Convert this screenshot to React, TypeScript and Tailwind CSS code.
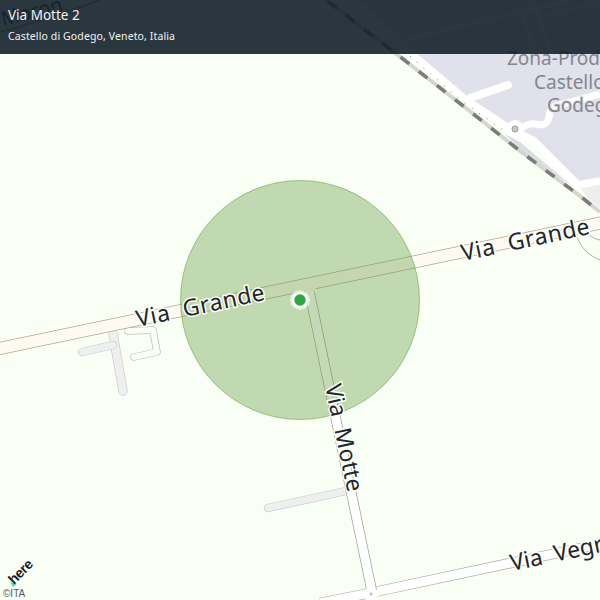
const Casing = ({ d, w, fill, edge, cap = "butt" }: { d: string; w: number; fill: string; edge: string; cap?: "butt" | "round" }) => (
  <>
    <path d={d} fill="none" stroke={edge} strokeWidth={w + 1.4} strokeLinecap={cap} strokeLinejoin="round" />
    <path d={d} fill="none" stroke={fill} strokeWidth={w} strokeLinecap={cap} strokeLinejoin="round" />
  </>
);

const labelClass =
  "fill-[#24252f] stroke-[#fafff5] font-['Noto_Sans',sans-serif] text-[23px] whitespace-pre [paint-order:stroke] [stroke-width:3px]";

function MapDrawing() {
  return (
    <svg width="600" height="600" viewBox="0 0 600 600" className="absolute inset-0 block">
      <rect width="600" height="600" fill="#fafff5" />
      {/* industrial zone */}
      <path d="M356 0 L413 55 L466 100 L507 127 L533 140 L578 185 L600 180 L600 0 Z" fill="#e0e1ea" />
      <path d="M578 185 L600 181 L600 208 L590 201 Z" fill="#eeeeee" />
      <path d="M505 134 L520 142 L572 186 L568 183 L530 160 Z" fill="#dcdde4" />
      {/* streets behind the header */}
      <path d="M404 40 L520 12 L600 -6 M520 12 L537 54 M532 0 L552 54 M545 16 L600 2" fill="none" stroke="#fafff5" strokeWidth="3" />
      <path d="M0 32 Q40 22 100 0" fill="none" stroke="#aaa" strokeWidth="2" />
      <text transform="translate(3 26) rotate(-14)" className="fill-[#2b2c3a] font-['Noto_Sans',sans-serif] text-[20px]">Moron</text>
      {/* road along the railway */}
      <path d="M353 0 L413 55 L466 100 L507 127 L533 140 L578 185 L600 181" fill="none" stroke="#ffffff" strokeWidth="7.5" strokeLinejoin="round" />
      <path d="M410 56 L463 102 L503 130" fill="none" stroke="#777" strokeWidth="1" strokeDasharray="1 8" />
      <path d="M470 98 L508 85" stroke="#ffffff" strokeWidth="8" strokeLinecap="round" />
      {/* winding road + roundabout */}
      <path d="M522 128 C535 118 540 130 547 122 C552 116 546 110 556 106 L600 94" fill="none" stroke="#ffffff" strokeWidth="7" />
      <circle cx="515" cy="129" r="9" fill="#ffffff" />
      <circle cx="515" cy="129" r="3" fill="#c9c9c9" stroke="#999" strokeWidth="1" />
      {/* railway */}
      <path d="M326 0 L403 59 L462 105 L520 151 L580 196 L600 212" fill="none" stroke="#d6d5d0" strokeWidth="4" />
      <path d="M326 0 L403 59 L462 105 L520 151 L580 196 L600 212" fill="none" stroke="#7b7b78" strokeWidth="3.5" strokeDasharray="11 12" strokeDashoffset="-2" />
      {/* zone label */}
      <g className="fill-[#84868f] stroke-[#e0e1ea] font-['Noto_Sans',sans-serif] text-[19px] [paint-order:stroke] [stroke-width:2px]">
        <text x="507" y="65">Zona-Produttiva</text>
        <text x="534" y="89">Castello</text>
        <text x="547" y="112">Godego</text>
      </g>
      {/* driveways */}
      <Casing d="M113 334 L123 391" w={8} fill="#efefef" edge="#cbcbcb" cap="round" />
      <Casing d="M82 352 L113 345" w={7} fill="#efefef" edge="#cbcbcb" cap="round" />
      <Casing d="M268 508 L346 491" w={7} fill="#efefef" edge="#cbcbcb" cap="round" />
      <Casing d="M128 331 L153 330 L157 352 L134 357" w={6} fill="#fafff5" edge="#bdbdbd" cap="round" />
      {/* right side curves */}
      <path d="M577 236 C580 248 590 256 600 260 M588 233 C590 237 595 239 600 240" fill="none" stroke="#b8ae98" strokeWidth="1" />
      {/* Via Vegro */}
      <Casing d="M320 603 L370 593 L600 544" w={9} fill="#ffffff" edge="#a9a9a3" />
      {/* Via Grande and Via Motte share their junction: edges first, then surfaces */}
      <path d="M-5 349.5 L605 222" fill="none" stroke="#ada68f" strokeWidth="12.9" />
      <path d="M308 285 L372 592" fill="none" stroke="#9a9a92" strokeWidth="10.4" />
      <path d="M-5 349.5 L605 222" fill="none" stroke="#fffaf1" strokeWidth="11.5" />
      <path d="M308 285 L372 592" fill="none" stroke="#ffffff" strokeWidth="9" />
      <path d="M304 281 L314 279 L316 291 L306 293 Z" fill="#fffaf1" />
      <circle cx="371" cy="594" r="7" fill="#ffffff" />
      <circle cx="371" cy="594" r="1.5" fill="#bbbbbb" />
      {/* accuracy circle */}
      <circle cx="300" cy="300" r="119.5" fill="#649a3e" fillOpacity="0.38" stroke="#649a3e" strokeOpacity="0.55" strokeWidth="1" />
      {/* street labels */}
      <text transform="translate(138 327) rotate(-12)" className={labelClass} letterSpacing="0.6">Via  Grande</text>
      <text transform="translate(463 261) rotate(-12)" className={labelClass} letterSpacing="0.6">Via  Grande</text>
      <text transform="translate(325 386) rotate(78)" className={labelClass}>Via  Motte</text>
      <text transform="translate(512 571) rotate(-12)" className={labelClass}>Via  Vegro</text>
      {/* marker */}
      <circle cx="300" cy="300" r="10" fill="#ffffff" fillOpacity="0.6" />
      <circle cx="300" cy="300" r="8" fill="#ffffff" fillOpacity="0.9" />
      <circle cx="300" cy="300" r="5.7" fill="#2fa544" />
      {/* logo */}
      <path d="M10 582 L17 584 L13 587 Z" fill="#48dad0" />
      <text transform="translate(14 585) rotate(-45)" className="fill-[#1b1c26] font-['Liberation_Sans',sans-serif] text-[14px] font-bold" letterSpacing="-0.4">here</text>
    </svg>
  );
}

export default function App() {
  return (
    <div className="relative h-[600px] w-[600px] overflow-hidden bg-[#fafff5]">
      <MapDrawing />
      <header className="relative flex h-[54px] flex-col bg-[#14212b]/90 px-2 pt-[6px] font-['Noto_Sans',sans-serif] text-[#f1f3f4]">
        <div className="text-[13.5px] leading-[19px]">Via Motte 2</div>
        <div className="mt-[3px] text-[10.5px] leading-[16px] tracking-[0.12px]">Castello di Godego, Veneto, Italia</div>
      </header>
      <div className="absolute bottom-[1px] left-[3px] font-['Liberation_Sans',sans-serif] text-[10px] leading-[11px] text-[#555b60]">©ITA</div>
    </div>
  );
}
